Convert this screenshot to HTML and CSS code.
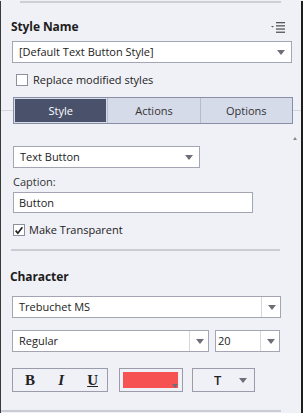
FILE: index.html
```html
<!DOCTYPE html>
<html lang="en">
<head>
  <meta charset="UTF-8">
  <title>Properties</title>
  <link rel="stylesheet" href="styles.css">
</head>
<body>
  <div class="panel">
    <div class="top-rule"></div>

    <div class="section-head">
      <h3>Style Name</h3>
      <svg class="menu-icon" viewBox="0 0 14 11" aria-label="Panel menu">
        <path d="M0 4h3l-1.5 1.6z" fill="#555"/>
        <rect x="5" y="0" width="9" height="1.3" fill="#555"/>
        <rect x="5" y="3.2" width="9" height="1.3" fill="#555"/>
        <rect x="5" y="6.4" width="9" height="1.3" fill="#555"/>
        <rect x="5" y="9.6" width="9" height="1.3" fill="#555"/>
      </svg>
    </div>

    <div class="select wide">
      <span>[Default Text Button Style]</span>
      <span class="arrow"></span>
    </div>

    <label class="check">
      <span class="box"></span>
      Replace modified styles
    </label>

    <div class="tabs-row">
      <div class="tabs">
        <div class="tab active">Style</div>
        <div class="tab">Actions</div>
        <div class="tab">Options</div>
      </div>
    </div>

    <div class="scroll-up"></div>

    <div class="select type">
      <span>Text Button</span>
      <span class="arrow"></span>
    </div>

    <div class="field-label">Caption:</div>
    <div class="text-input">Button</div>

    <label class="check checked">
      <span class="box">
        <svg viewBox="0 0 12 12"><path d="M2 6.2l2.6 3L10 2.2" fill="none" stroke="#222" stroke-width="2"/></svg>
      </span>
      Make Transparent
    </label>

    <div class="divider"></div>

    <h3 class="char-head">Character</h3>

    <div class="select font">
      <span>Trebuchet MS</span>
      <span class="arrow split"></span>
    </div>

    <div class="font-row">
      <div class="select weight">
        <span>Regular</span>
        <span class="arrow split"></span>
      </div>
      <div class="select size">
        <span>20</span>
        <span class="arrow split"></span>
      </div>
    </div>

    <div class="format-row">
      <div class="biu">
        <span class="b">B</span>
        <span class="i">I</span>
        <span class="u">U</span>
      </div>
      <div class="color">
        <span class="swatch"></span>
        <span class="mini-arrow"></span>
      </div>
      <div class="case">
        <span>T</span>
        <span class="arrow"></span>
      </div>
    </div>

    <div class="bottom-rule"></div>
  </div>
</body>
</html>
```

FILE: styles.css
```css
* {
  margin: 0;
  padding: 0;
  box-sizing: border-box;
}

body {
  background-color: #f0f1f7;
  font-family: 'Open Sans', 'DejaVu Sans', sans-serif;
  font-size: 11px;
  line-height: 16px;
  color: #222;
}

.panel {
  position: relative;
  width: 303px;
  height: 413px;
  background-color: #f0f1f7;
  border-left: 1px solid #3a3a3a;
  border-right: 2px solid #1e1e1e;
  padding: 0 10px 0 10px;
}

.top-rule {
  height: 2px;
  margin: 1px 10px 0 9px;
  background-color: #cdced6;
}

.section-head {
  display: flex;
  justify-content: space-between;
  align-items: center;
  margin-top: 16px;
  padding-right: 6px;
}

h3 {
  font-size: 12px;
  font-weight: 700;
  color: #1c1c1c;
  letter-spacing: -0.1px;
}

.menu-icon {
  width: 14px;
  height: 11px;
}

.select {
  display: flex;
  align-items: center;
  justify-content: space-between;
  height: 22px;
  background-color: #fff;
  border: 1px solid #a3a5b3;
  padding-left: 6px;
  padding-right: 6px;
  color: #222;
}

.select.wide {
  margin: 6px 0 0 1px;
  width: 280px;
}

.arrow {
  width: 0;
  height: 0;
  border-left: 4px solid transparent;
  border-right: 4px solid transparent;
  border-top: 5px solid #6e6e78;
}

.arrow.split {
  position: relative;
  height: 20px;
  border: none;
  width: 19px;
  border-left: 1px solid #d6d7de;
  margin-right: -6px;
}

.arrow.split::after {
  content: "";
  position: absolute;
  left: 6px;
  top: 8px;
  border-left: 4px solid transparent;
  border-right: 4px solid transparent;
  border-top: 5px solid #6e6e78;
}

.check {
  display: flex;
  align-items: center;
  gap: 5px;
  margin: 9px 0 0 5px;
  color: #222;
}

.box {
  display: flex;
  align-items: center;
  justify-content: center;
  width: 12px;
  height: 12px;
  background-color: #fff;
  border: 1px solid #8d8f9c;
}

.box svg {
  width: 11px;
  height: 11px;
}

.tabs-row {
  position: relative;
  margin: 9px -10px 0 -10px;
  padding: 0 10px 0 12px;
}

.tabs-row::before {
  content: "";
  position: absolute;
  left: 0;
  right: 0;
  top: 13px;
  height: 1px;
  background-color: #d3d4dc;
}

.tabs {
  position: relative;
  display: flex;
  width: 280px;
  height: 27px;
  border: 1px solid #8a8ea6;
  background-color: #d6dbea;
}

.tab {
  flex: 1;
  display: flex;
  align-items: center;
  justify-content: center;
  color: #333;
  border-left: 1px solid #b7bccd;
}

.tab:first-child {
  border-left: none;
}

.tab.active {
  background-color: #4a526b;
  color: #fff;
  margin: 1px;
}

.scroll-up {
  position: absolute;
  right: 4px;
  top: 136px;
  border-left: 2px solid transparent;
  border-right: 2px solid transparent;
  border-bottom: 3px solid #888;
}

.select.type {
  width: 187px;
  margin: 22px 0 0 2px;
}

.field-label {
  margin: 6px 0 0 2px;
  color: #333;
}

.text-input {
  width: 240px;
  height: 21px;
  margin: 2px 0 0 2px;
  padding: 2px 5px;
  background-color: #fff;
  border: 1px solid #a3a5b3;
  line-height: 15px;
}

.check.checked {
  margin: 9px 0 0 2px;
  gap: 4px;
}

.divider {
  height: 2px;
  margin: 11px 11px 0 0;
  background-color: #cacbd3;
}

.char-head {
  margin: 18px 0 0 -1px;
}

.select.font {
  width: 269px;
  margin: 11px 0 0 1px;
}

.font-row {
  display: flex;
  gap: 6px;
  margin: 12px 0 0 1px;
}

.select.weight {
  width: 197px;
}

.select.size {
  width: 65px;
  padding-left: 2px;
}

.format-row {
  display: flex;
  margin: 16px 0 0 1px;
}

.biu {
  display: flex;
  justify-content: space-between;
  align-items: center;
  width: 96px;
  height: 24px;
  border: 1px solid #9a9cab;
  padding: 0 9px 0 12px;
  font-family: 'Liberation Serif', serif;
  font-size: 15px;
  color: #222;
}

.biu .b {
  font-weight: 700;
}

.biu .i {
  font-style: italic;
  font-weight: 700;
}

.biu .u {
  text-decoration: underline;
  font-weight: 700;
}

.color {
  position: relative;
  width: 64px;
  height: 24px;
  margin-left: 11px;
  border: 1px solid #9a9cab;
  padding: 3px;
}

.swatch {
  display: block;
  width: 55px;
  height: 16px;
  background-color: #f75252;
}

.mini-arrow {
  position: absolute;
  right: 4px;
  bottom: 3px;
  border-left: 3px solid transparent;
  border-right: 3px solid transparent;
  border-top: 4px solid #6e6e78;
}

.case {
  display: flex;
  align-items: center;
  justify-content: space-between;
  width: 63px;
  height: 24px;
  margin-left: 9px;
  border: 1px solid #9a9cab;
  padding: 0 7px 0 21px;
  font-size: 13px;
  font-weight: 600;
}

.bottom-rule {
  position: absolute;
  left: 0;
  right: 20px;
  bottom: 2px;
  height: 2px;
  background-color: #cacbd3;
}
```
